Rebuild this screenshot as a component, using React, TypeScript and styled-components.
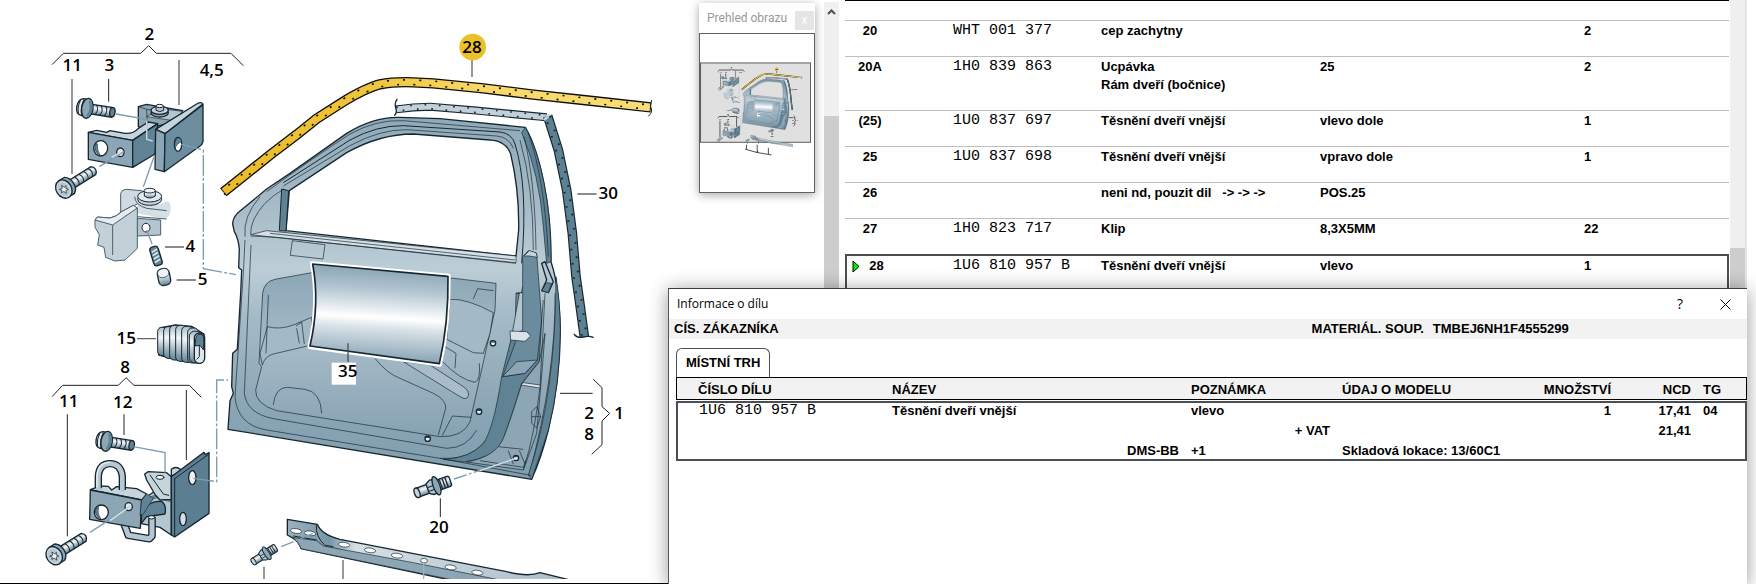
import React from 'react';
import styled, { createGlobalStyle } from 'styled-components';

const GlobalStyle = createGlobalStyle`
  * { box-sizing: border-box; }
  html, body, #root { margin: 0; min-height: 100vh; }
  body {
    background: #fff;
    color: #000;
    overflow: hidden;
    font: bold 13px/18px "Liberation Sans", Arial, sans-serif;
  }
  button { font: inherit; color: inherit; border: 0; padding: 0; background: none; cursor: pointer; }
`;

const uiFont = '"Open Sans", "Segoe UI", sans-serif';
const slate = '#4a4f55';

/* ---------- page frame ---------- */

const Page = styled.main`
  position: relative;
  display: grid;
  grid-template-columns: minmax(0, 839fr) minmax(0, 908fr);
  min-height: 100vh;
  padding-right: 9px;
  overflow: hidden;
`;

const Pane = styled.section`
  display: flex;
  min-width: 0;
`;

const DrawingArea = styled.div`
  position: relative;
  flex: 1;
  min-width: 0;
  overflow: hidden;
  border-bottom: 1px solid #000;
`;

const DrawingSvg = styled.svg`
  display: block;
  width: 680px;
  height: 579px;
`;

const ListArea = styled.div`
  flex: 1;
  min-width: 0;
  margin: 0 1px 0 6px;
  border-top: 1px solid #000;
  padding-top: 19px;
`;

const ScrollTrack = styled.div<{ $top: number; $edge?: boolean }>`
  display: flex;
  flex-direction: column;
  flex: 0 0 ${p => (p.$edge ? 17 : 15)}px;
  margin-top: ${p => p.$top}px;
  background: #f0f0f0;
  border-right: ${p => (p.$edge ? '2px solid #e4e4e4' : '0')};
`;

const ScrollUp = styled.button`
  height: 20px;
  display: grid;
  place-items: center;
`;

const ScrollThumb = styled.div<{ $offset: number }>`
  flex: 1;
  margin-top: ${p => p.$offset}px;
  background: #cdcdcd;
`;

/* ---------- overview window ---------- */

const Overview = styled.aside`
  position: absolute;
  top: 3px;
  right: 9px;
  width: 116px;
  background: #fff;
  box-shadow: 0 2px 9px rgba(0, 0, 0, 0.35);
`;

const OverviewBar = styled.header`
  display: flex;
  align-items: center;
  justify-content: space-between;
  height: 30px;
  padding: 0 1px 0 8px;
  color: #999;
  font: 12px/16px Roboto, "Segoe UI", sans-serif;
`;

const OverviewClose = styled.button`
  width: 19px;
  height: 19px;
  margin-top: 4px;
  background: #e5e5e5;
  color: #fff;
  line-height: 16px;
`;

const OverviewMap = styled.svg`
  display: block;
  width: 116px;
  height: 160px;
  border: 1px solid #606060;
`;

/* ---------- parts list ---------- */

const PartsTable = styled.table`
  width: 100%;
  table-layout: fixed;
  border-spacing: 0;
`;

const Col = styled.col<{ $w?: number }>`
  width: ${p => (p.$w ? `${p.$w}px` : 'auto')};
`;

const PartRow = styled.tr<{ $selected?: boolean }>`
  td, th {
    padding: 1px 0 16px;
    vertical-align: top;
    text-align: left;
    border-top: ${p => (p.$selected ? `2px solid ${slate}` : '1px solid #bfbfbf')};
    border-bottom: ${p => (p.$selected ? `2px solid ${slate}` : '0')};
  }
  th:first-child { border-left: ${p => (p.$selected ? `2px solid ${slate}` : '0')}; }
  td:last-child { border-right: ${p => (p.$selected ? `2px solid ${slate}` : '0')}; }
`;

const Position = styled.span<{ $marked?: boolean }>`
  display: flex;
  align-items: center;
  justify-content: center;
  gap: 9px;
  width: ${p => (p.$marked ? 42 : 50)}px;
`;

const Marker = styled.svg`
  width: 8px;
  height: 13px;
`;

const Line = styled.span`
  display: block;
  white-space: pre;
`;

const Code = styled.span`
  display: block;
  font-family: "Liberation Mono", "Courier New", monospace;
  font-size: 15px;
  font-weight: 400;
  white-space: pre;
`;

/* ---------- part information dialog ---------- */

const Dialog = styled.section`
  position: absolute;
  left: 668px;
  right: 9px;
  top: 288px;
  bottom: -1px;
  background: #fff;
  border-top: 1px solid #3c3c3c;
  border-left: 1px solid #5a5a5a;
  box-shadow: 0 2px 18px rgba(0, 0, 0, 0.4);
`;

const TitleBar = styled.header`
  display: flex;
  align-items: center;
  height: 30px;
  padding: 0 14px 0 8px;
  font: 12px/16px ${uiFont};
`;

const Title = styled.h1`
  flex: 1;
  margin: 0;
  font: inherit;
`;

const WindowButton = styled.button`
  width: 16px;
  height: 16px;
  display: grid;
  place-items: center;
  margin-left: 29px;
  font-size: 14px;
`;

const InfoBand = styled.div`
  display: grid;
  grid-template-columns: 637fr 435fr;
  height: 20px;
  padding-left: 5px;
  background: #f2f2f2;
  line-height: 20px;
`;

const Vin = styled.span`
  margin-left: 9px;
`;

const Tab = styled.button`
  display: block;
  height: 29px;
  margin: 9px 0 0 7px;
  padding: 0 9px;
  border: 1px solid ${slate};
  border-bottom: 0;
  border-radius: 6px 6px 0 0;
  background: #fff;
`;

const DetailTable = styled.table`
  width: calc(100% - 7px);
  margin-left: 7px;
  table-layout: fixed;
  border-spacing: 0;

  th, td { padding: 0; text-align: left; white-space: pre; }
  th:first-child, td:first-child { padding-left: 21px; }
  th {
    height: 23px;
    padding-top: 2px;
    background: #f2f2f2;
    border: solid #000;
    border-width: 1px 0;
  }
  th:first-child { border-left-width: 1px; }
  th:last-child { border-right-width: 1px; }

  tbody::before { content: ""; display: table-row; height: 1px; }
  td { height: 20px; line-height: 16px; vertical-align: top; }
  td:first-child { border-left: 2px solid ${slate}; }
  td:last-child { border-right: 2px solid ${slate}; }
  tbody tr:first-child td { height: 22px; border-top: 2px solid ${slate}; }
  tbody tr:last-child td { height: 18px; border-bottom: 2px solid ${slate}; }
`;

const HeadCell = styled.th<{ $right?: boolean }>`
  && { text-align: ${p => (p.$right ? 'right' : 'left')}; }
`;

const Cell = styled.td<{ $right?: boolean; $gap?: number }>`
  && {
    text-align: ${p => (p.$right ? 'right' : 'left')};
    padding-right: ${p => p.$gap ?? 0}px;
  }
`;

/* ---------- exploded drawing ---------- */

const ink = '#172731';
const pale = '#c6d4dc';
const light = '#b4c6d0';
const mid = '#8ca6b5';
const dark = '#5f8294';

const Label = styled.text`
  font: 600 51px "Open Sans", "Noto Sans", sans-serif;
  fill: #000;
  text-anchor: middle;
`;

const labels: [string, number, number][] = [
  ['2', 448, 121], ['11', 217, 214], ['3', 328, 214], ['4,5', 635, 227],
  ['28', 1416, 160], ['30', 1825, 598], ['4', 571, 756], ['5', 608, 856],
  ['15', 379, 1031], ['8', 375, 1118], ['11', 206, 1222], ['12', 368, 1224],
  ['35', 1043, 1132], ['2', 1767, 1256], ['1', 1857, 1256], ['8', 1767, 1321],
  ['20', 1317, 1598],
];

const Defs = ({ id }: { id: string }) => (
  <defs>
    <linearGradient id={`${id}-door`} x1="0" y1="0" x2="0" y2="1">
      <stop offset="0" stopColor="#8fa9b8" />
      <stop offset="0.22" stopColor="#a3b9c6" />
      <stop offset="0.42" stopColor="#bccdd6" />
      <stop offset="0.55" stopColor="#a5bac7" />
      <stop offset="0.8" stopColor="#8ba6b5" />
      <stop offset="1" stopColor="#7f9dae" />
    </linearGradient>
    <linearGradient id={`${id}-recess`} x1="0" y1="0" x2="0" y2="1">
      <stop offset="0" stopColor="#8ca7b6" />
      <stop offset="0.45" stopColor="#a6bac7" />
      <stop offset="1" stopColor="#86a2b2" />
    </linearGradient>
    <linearGradient id={`${id}-foil`} x1="0.08" y1="0" x2="0" y2="1">
      <stop offset="0" stopColor="#8aa5b4" />
      <stop offset="0.22" stopColor="#b2c5d0" />
      <stop offset="0.38" stopColor="#dde5eb" />
      <stop offset="0.5" stopColor="#ffffff" />
      <stop offset="0.62" stopColor="#d5dfe6" />
      <stop offset="0.8" stopColor="#a9bdc9" />
      <stop offset="1" stopColor="#7595a6" />
    </linearGradient>
    <linearGradient id={`${id}-metal`} x1="0" y1="0" x2="0" y2="1">
      <stop offset="0" stopColor="#a7bcc8" />
      <stop offset="0.35" stopColor="#f4f7f9" />
      <stop offset="1" stopColor="#5f8294" />
    </linearGradient>
    <linearGradient id={`${id}-gold`} x1="0" y1="0" x2="1" y2="0">
      <stop offset="0" stopColor="#ebbb28" />
      <stop offset="0.35" stopColor="#f0c53c" />
      <stop offset="0.6" stopColor="#f9d868" />
      <stop offset="1" stopColor="#f9dc78" />
    </linearGradient>
    <linearGradient id={`${id}-sill`} x1="0" y1="0" x2="1" y2="0">
      <stop offset="0" stopColor="#9ab2c0" />
      <stop offset="0.15" stopColor="#7896a7" />
      <stop offset="0.24" stopColor="#d5dfe5" />
      <stop offset="1" stopColor="#a9bdc9" />
    </linearGradient>
  </defs>
);

const FlangeBolt = ({ id, x, y }: { id: string; x: number; y: number }) => (
  <g transform={`translate(${x} ${y}) rotate(9)`} stroke={ink} strokeWidth="4">
    <path d="M8-14H76Q86 0 76 15H8Z" fill={`url(#${id}-metal)`} />
    <path d="M26-14q10 14 0 28M40-14q10 14 0 28M54-14q10 14 0 28" fill="none" strokeWidth="3" />
    <ellipse cx="76" cy="0" rx="8" ry="14" fill={dark} />
    <path d="M-2-27H-16Q-32-22-32 0T-16 24H-2Z" fill="#dfe7ec" />
    <path d="M-24-20q-7 20 0 40M-14-25q-8 25 0 48" fill="none" strokeWidth="3" />
    <ellipse cx="0" cy="0" rx="17" ry="30" fill={mid} />
    <path d="M4-24q14 24 0 48" stroke={dark} strokeWidth="9" fill="none" />
  </g>
);

const SocketBolt = ({ id, x, y }: { id: string; x: number; y: number }) => (
  <g transform={`translate(${x} ${y}) rotate(-32)`} stroke={ink} strokeWidth="4">
    <path d="M15-14H100Q116 0 100 14H15Z" fill={`url(#${id}-metal)`} />
    <path d="M42-13q9 13 0 26M58-13q9 13 0 26M74-13q9 13 0 26M90-13q9 13 0 26" fill="none" strokeWidth="3" />
    <path d="M-4-29H16Q30-20 30 0T16 28H-4Z" fill={mid} />
    <ellipse cx="-4" cy="0" rx="23" ry="29" fill={pale} />
    <ellipse cx="-5" cy="0" rx="16" ry="21" fill={light} stroke="none" />
    <path d="M-16-6l9 2 3-9 4 9 7-1-5 6 5 7-8-1-4 8-3-9-8 0 5-6Z" fill="#f1f5f7" strokeWidth="2" />
  </g>
);

const Stud = ({ id, x, y, k, r }: { id: string; x: number; y: number; k: number; r: number }) => (
  <g transform={`translate(${x} ${y}) rotate(${r}) scale(${k})`} stroke={ink} strokeWidth="4">
    <rect x="10" y="-16" width="42" height="32" rx="5" fill={`url(#${id}-metal)`} />
    <path d="M22-15v30M31-15v30M40-15v30" fill="none" />
    <rect x="-54" y="-14" width="38" height="28" fill={`url(#${id}-metal)`} />
    <ellipse cx="-54" cy="0" rx="8" ry="15" fill={pale} />
    <path d="M-20-16L-6-23 8-20V22L-8 22-20 14Z" fill={light} />
    <path d="M-20-4H6M-18 8H6" fill="none" strokeWidth="3" />
    <ellipse cx="8" cy="0" rx="10" ry="29" fill={mid} />
  </g>
);

const UpperHinge = () => (
  <g stroke={ink} strokeWidth="4" strokeLinejoin="round">
    <path d="M415 320L440 313 548 332 500 372 440 386 415 380Z" fill={mid} />
    <path d="M415 320L440 328 442 384M440 328L470 332" fill="none" strokeWidth="2" />
    <path d="M440 350L520 362 548 334 480 326Z" fill={light} strokeWidth="2" />
    <ellipse cx="479" cy="338" rx="26" ry="13" fill={mid} />
    <ellipse cx="479" cy="331" rx="26" ry="12" fill={pale} />
    <path d="M468 318V331Q479 339 491 331V318Z" fill={light} strokeWidth="3" />
    <ellipse cx="479" cy="318" rx="11" ry="5" fill="#e9eff3" strokeWidth="3" />
    <path d="M265 397L290 391 320 397 330 392 375 400Q400 402 415 385L445 366 473 371 398 421Z" fill={pale} />
    <path d="M265 397L398 421V502L265 478Z" fill={mid} />
    <path d="M398 421L473 371 465 462 398 502Z" fill={dark} />
    <ellipse cx="302" cy="445" rx="21" ry="23" fill="#fff" />
    <path d="M288 430Q276 450 300 466 290 450 292 432Z" fill={dark} strokeWidth="2" />
    <ellipse cx="361" cy="457" rx="11" ry="13" fill="#e6edf1" />
    <path d="M467 388L590 312Q604 304 609 312L495 401Z" fill={pale} />
    <path d="M467 388L495 401 493 515 465 508Z" fill={mid} />
    <path d="M495 401L609 314V424Q607 434 600 438L493 515Z" fill="#6b8d9e" />
    <ellipse cx="534" cy="433" rx="11" ry="21" fill="#fff" />
    <path d="M536 413Q522 416 524 445 532 428 545 424 542 412 536 413Z" fill={dark} strokeWidth="2" />
  </g>
);

const GhostHinge = ({ id }: { id: string }) => (
  <g stroke="#45616f" strokeWidth="3" strokeLinejoin="round">
    <path d="M362 580Q364 570 378 568L425 572 440 600 405 615 380 636 362 645Z" fill="#cfdae1" />
    <path d="M405 600Q420 615 485 612 512 590 512 625 512 650 495 657L412 640V612Z" fill="#d6dfe5" stroke="none" />
    <path d="M404 590Q405 615 440 625L500 632M412 650L500 657" fill="none" />
    <path d="M412 655L482 660V705L412 708Z" fill="#b4c5cf" />
    <ellipse cx="449" cy="598" rx="36" ry="18" fill="#c4d2da" stroke={ink} />
    <ellipse cx="449" cy="589" rx="36" ry="17" fill="#e2e9ed" stroke={ink} />
    <path d="M433 573V588Q449 600 466 588V573Z" fill={`url(#${id}-metal)`} stroke={ink} />
    <ellipse cx="449" cy="572" rx="17" ry="7" fill="#edf2f5" stroke={ink} />
    <path d="M285 660L292 651 330 654Q350 650 365 635L400 616 412 624V745L375 780 345 783 317 772 312 742 293 735 298 704 285 682Z" fill="#c3d0d8" />
    <path d="M285 660L292 651 330 654Q350 650 365 635L400 616 412 624 338 675Z" fill="#e6ecf0" />
    <path d="M338 675V765" fill="none" />
    <ellipse cx="438" cy="683" rx="12" ry="13" fill="#fff" stroke={ink} />
  </g>
);

const Latch = () => (
  <g transform="translate(0 870)" stroke={ink} strokeWidth="4" strokeLinejoin="round" strokeLinecap="round">
    <path d="M425 630L470 600 514 625V735L480 712 420 700Z" fill={light} />
    <path d="M425 660Q455 630 485 635 500 645 495 672L440 680 424 700Z" fill={dark} />
    <path d="M418 640L470 618 514 632" stroke={dark} strokeWidth="12" fill="none" />
    <path d="M434 552L445 545 500 548 514 560V628L480 630 466 615 440 570Z" fill={pale} />
    <path d="M450 555L490 612 506 616" fill="none" strokeWidth="3" />
    <ellipse cx="480" cy="562" rx="12" ry="6" fill="#fff" strokeWidth="3" />
    <path d="M514 557V538Q527 527 541 538L545 550Z" fill={pale} />
    <path d="M372 700L385 736 448 746 456 738V688" fill="none" strokeWidth="23" />
    <path d="M372 700L385 736 448 746 456 738V688" fill="none" stroke={light} strokeWidth="15" />
    <ellipse cx="455" cy="682" rx="10" ry="5" fill="#edf2f5" strokeWidth="3" />
    <path d="M271 599L300 588 325 589 335 600 350 590 410 596 440 612 425 630Z" fill={pale} />
    <path d="M295 595V558Q298 521 330 521T367 558V600" fill="none" strokeWidth="22" strokeLinecap="butt" />
    <path d="M295 595V558Q298 521 330 521T367 558V600" fill="none" stroke="#b6c8d2" strokeWidth="14" />
    <path d="M291 590V558Q294 517 330 517" fill="none" stroke="#e9eff3" strokeWidth="4" />
    <path d="M271 600L425 630 421 715 269 688Z" fill={mid} />
    <path d="M425 630L440 612 460 625 430 672 421 676Z" fill={dark} strokeWidth="2" />
    <ellipse cx="304" cy="667" rx="21" ry="22" fill="#fff" />
    <path d="M290 652Q278 672 302 687 290 670 295 652Z" fill={dark} strokeWidth="2" />
    <ellipse cx="386" cy="650" rx="11" ry="12" fill="#dfe7ec" />
    <path d="M514 560L612 487 616 494 627 488V670L524 741 514 735Z" fill="#5b7e90" />
    <path d="M524 566L627 492M524 566V738" fill="none" strokeWidth="3" />
    <ellipse cx="577" cy="563" rx="11" ry="21" fill="#f1f5f7" />
    <ellipse cx="549" cy="687" rx="10" ry="20" fill="#d4dee4" />
  </g>
);

const boot: [number, number, number][] = [
  [473, 112, 197], [491, 110, 205], [509, 106, 210], [527, 106, 214], [545, 109, 217], [563, 114, 219],
];

const Boot = ({ id }: { id: string }) => (
  <g transform="translate(0 870)" stroke={ink} strokeWidth="4">
    <path d="M480 114L526 105 575 109 612 132 602 220 540 212 476 195Z" fill={mid} />
    {boot.map(([x, t, b]) => (
      <rect key={x} x={x} y={t} width="32" height={b - t} rx="13" fill={`url(#${id}-metal)`} strokeWidth="3" />
    ))}
    <path d="M568 206V135Q577 114 606 130L592 219Q574 220 568 206Z" fill={`url(#${id}-metal)`} strokeWidth="3" />
    <rect x="583" y="129" width="31" height="91" rx="15" fill="#dfe7ec" />
    <path d="M586 160Q586 132 600 132T611 158V180L600 166 586 168Z" fill={dark} strokeWidth="3" />
    <path d="M598 165V200L590 208" fill="none" strokeWidth="3" />
  </g>
);

const Door = ({ id }: { id: string }) => (
  <g transform="translate(600 0)" stroke={ink} strokeWidth="2" strokeLinejoin="round" fill="none">
    {/* frame and skin, with the window left open */}
    <path
      fillRule="evenodd"
      fill={`url(#${id}-door)`}
      strokeWidth="4"
      d="M98 672Q98 655 112 640L200 567 270 520 440 400Q520 350 600 352L720 356 976 382Q1010 440 1032 550 1054 660 1053 785
         1078 860 1081 990 1080 1150 1045 1290 1025 1370 995 1438L84 1288 90 1202 100 1180 95 1160 98 1060 112 1048
         122 880 125 810 116 803 118 748Q115 715 103 695ZM268 572L440 458Q540 402 640 402L870 420Q918 422 932 462 958 570 956 690L948 768 258 692Z"
    />
    {/* frame profile */}
    <path d="M200 575Q330 480 450 402 530 358 610 362L960 392" />
    <path d="M250 548L450 420Q530 376 610 377L900 396Q935 400 945 432 985 560 965 790" strokeWidth="3" />
    <path d="M250 558L450 437Q540 388 620 389L890 408Q928 412 940 445" />
    <path d="M152 702Q150 660 195 610 220 585 250 568M135 710Q128 650 180 590" />
    <path d="M965 398Q1018 520 1030 680L1040 790 1053 785Q1054 660 1032 550 1010 440 976 382Z" fill={dark} />
    <path d="M972 410Q1005 540 1008 750M985 400Q1035 540 1045 770M960 420Q1000 560 1000 750" />
    <path d="M245 567L266 572 258 693 238 692Z" fill={dark} strokeWidth="3" />
    {/* belt line */}
    <path d="M152 704L200 692 948 768V788L225 712Z" fill="#d5dfe5" />
    <path d="M152 708L230 712 948 790M210 700L945 780" />
    <path d="M277 722L375 734 369 777 271 766Z" />
    {/* inner contours */}
    <path d="M135 720L130 820 105 1190Q112 1275 200 1290L720 1375Q850 1382 880 1270L968 860" />
    <path d="M153 735L133 1180Q140 1240 220 1256L740 1345Q800 1345 830 1290" />
    <path
      d="M335 818L225 838Q192 845 188 880L177 1090 185 1100 167 1170Q165 1212 230 1232L720 1310Q790 1312 810 1265L885 930 888 850 745 833Z"
      fill={`url(#${id}-recess)`}
    />
    <path d="M202 980Q240 990 280 975L335 952V1035L220 1062Q195 1068 187 1095L180 1060Z" fill="#a4b9c6" />
    <path d="M205 885L198 1060M288 978L305 966 313 1032M290 985L298 1030" />
    <path d="M220 1215Q225 1162 262 1162L315 1168Q362 1175 365 1240" />
    <path d="M750 898Q800 895 880 938L870 1000 850 1060 820 1058 740 1018Z" fill="#a4b9c6" />
    <path d="M820 897L833 866 880 872" />
    <path d="M525 1075Q560 1120 600 1135L700 1180Q740 1200 737 1225L715 1305" />
    <path d="M610 1085L780 1190Q800 1203 806 1186 806 1170 790 1160L690 1095Z" fill="#a9bcc9" />
    <path d="M725 1082Q780 1140 825 1147 842 1140 838 1090M735 1040L768 1060 765 1105" />
    <path d="M727 1306L757 1248 815 1252" />
    {/* lock side */}
    <path
      d="M968 880L905 1130Q880 1290 850 1330 810 1375 730 1378L790 1386Q880 1375 905 1330 935 1250 965 1150L1018 1085 1025 960Z"
      fill={dark}
    />
    <path d="M965 1152L1018 1085 1035 1000 1028 1090 1010 1300 970 1410 800 1386Q890 1370 912 1310 935 1250 965 1152Z" fill={mid} />
    <path d="M948 880L968 878V770L985 752 1010 760 1025 960 1012 1080 975 1120 908 1130 945 1030Z" fill="#6a8c9d" />
    <path d="M948 880L968 878V990L935 1010 958 880Z" fill={light} />
    <path d="M972 768L988 752 1008 758 1012 772 988 768Z" fill={pale} />
    <path d="M930 993L980 995 992 1008 975 1024 932 1020Z" fill="#d9e2e8" />
    <path d="M908 1130L950 1085 1012 1080 975 1120Z" fill={mid} />
    <path d="M1025 790L1035 785 1060 845 1045 878 1025 872 1040 840Z" fill={light} strokeWidth="4" />
    <path d="M1025 872L1045 878 1055 850 1040 848Z" fill={dark} />
    <path d="M1035 880L1020 1160Q1005 1300 970 1410M1065 880Q1068 1120 988 1424M1030 900L1024 970" />
    <path d="M1068 830Q1080 900 1081 990 1080 1150 1045 1290L995 1438 985 1425Q1068 1180 1068 830Z" fill={dark} />
    <path d="M970 1148L1020 1155V1164L963 1155Z" fill="#e1e8ed" />
    <path d="M1010 1220L1022 1250 1010 1284 995 1270V1235ZM995 1250H1022" />
    <path d="M895 1340L970 1348M840 1382L970 1402 978 1380M925 1352L940 1392M958 1352L975 1392M720 1375L992 1426" />
    {[[879, 1030], [837, 1235], [683, 1316], [948, 1374]].map(([x, y]) => (
      <g key={x}>
        <circle cx={x} cy={y} r="8" fill="#e9eff3" strokeWidth="4" />
        <path d={`M${x - 5} ${y - 4}h10`} strokeWidth="3" />
      </g>
    ))}
    {/* foil panel */}
    <path d="M336 790L746 827Q748 970 720 1094L328 1041Q358 910 336 790Z" fill="#fff" stroke="#fff" strokeWidth="12" />
    <path d="M338 792L744 829Q746 970 718 1091L330 1038Q360 910 338 792Z" fill={`url(#${id}-foil)`} strokeWidth="5" />
    <rect x="395" y="1088" width="73" height="66" fill="#fff" stroke="none" />
    <path d="M444 1030V1086" strokeWidth="4" stroke="#44525b" />
  </g>
);

const goldPath = 'M70 577L135 525 210 465 290 404 350 356 430 305Q500 263 540 253 580 245 640 247L700 250 850 265 1000 284 1150 300 1353 322';
const topSeal = 'M588 328Q640 320 690 320L820 331 1040 352';
const sideSeal = 'M1043 348L1075 450 1100 570 1117 700 1128 830 1138 900 1153 1010';

const Seals = ({ id }: { id: string }) => (
  <g transform="translate(600 0)" fill="none">
    <path d={goldPath} stroke="#0d0d08" strokeWidth="31" />
    <path d="M72 575L135 525 210 465 290 404 350 356 430 305Q500 263 540 253 580 245 640 247L700 250 850 265 1000 284 1150 300 1350 322" stroke={`url(#${id}-gold)`} strokeWidth="23" />
    <g stroke="#141208" strokeWidth="5">
      <path d={goldPath} strokeDasharray="6 42" transform="translate(2 7)" />
      <path d={goldPath} strokeDasharray="6 42" strokeDashoffset="-22" transform="translate(-2 -7)" />
    </g>
    <path d="M1355 300Q1347 318 1355 330 1356 340 1345 349" stroke={ink} strokeWidth="3" />
    <path d={topSeal} stroke={ink} strokeWidth="24" />
    <path d={topSeal} stroke="#c2d0d9" strokeWidth="17" />
    <path d={topSeal} stroke={ink} strokeWidth="5" strokeDasharray="5 38" transform="translate(0 -6)" />
    <path d={topSeal} stroke={ink} strokeWidth="5" strokeDasharray="5 38" strokeDashoffset="-20" transform="translate(0 6)" />
    <path d={sideSeal} stroke={ink} strokeWidth="29" />
    <path d={sideSeal} stroke="#5d8092" strokeWidth="22" />
    <path d="M1032 360L1050 344" stroke="#c2d0d9" strokeWidth="8" />
    <path d={sideSeal} stroke={ink} strokeWidth="6" strokeDasharray="5 38" transform="translate(7 0)" />
    <path d={sideSeal} stroke={ink} strokeWidth="6" strokeDasharray="5 38" strokeDashoffset="-20" transform="translate(-7 0)" />
    <path d="M592 297Q582 308 588 326 592 338 583 347M1122 1002Q1132 1016 1150 1011T1181 1013" stroke={ink} strokeWidth="4" />
  </g>
);

const Sill = ({ id, full }: { id: string; full?: boolean }) => (
  <g transform="translate(600 720)" stroke={ink} strokeWidth="4" strokeLinejoin="round">
    <path
      d={full
        ? 'M262 838L352 853Q365 885 420 898L940 1000 1160 1030 1160 1085 760 1018 303 926 285 898 262 885Z'
        : 'M262 838L352 853Q365 885 420 898L920 995Q985 1012 1020 998L1110 1020 760 1022 303 926Q298 906 280 895L262 885Z'}
      fill={`url(#${id}-sill)`}
    />
    <path d="M277 892L350 902 370 918 640 968 900 1020H760L303 926Q296 906 277 892Z" fill={mid} strokeWidth="2" />
    <path d="M349 855Q346 890 375 916L400 920M350 900L280 888" fill="none" strokeWidth="3" />
    {[[288, 873], [330, 880], [432, 914], [510, 931], [591, 947], [672, 962], [752, 982], [832, 998]].map(([x, y]) => (
      <ellipse key={x} cx={x} cy={y} rx={x === 672 ? 10 : 17} ry="7" fill="#fff" strokeWidth="2" transform={`rotate(8 ${x} ${y})`} />
    ))}
  </g>
);

const Leaders = ({ weight }: { weight: number }) => (
  <g fill="none" stroke="#222" strokeWidth={weight}>
    <path d="M156 194L190 160H422L446 137 469 160H693L730 197" />
    <path d="M156 1190L188 1156H355L378 1133 402 1156H568L604 1192" />
    <path d="M1780 1138L1806 1163V1220L1829 1240 1806 1263V1334L1775 1363" />
    <path d="M216 237V522M537 180V315M495 741H552M530 840H588M1732 582H1790M411 1016H468M792 1700V1737M1029 1680V1737M1416 180V231" stroke="#666" strokeWidth={weight + 1} />
    <path d="M326 237V305M202 1243V1609M372 1243V1305M559 1170V1380M1680 1180H1778M1321 1495V1551" />
  </g>
);

const AssemblyLines = () => (
  <g fill="none" stroke="#7c9db1" strokeWidth="4">
    <path d="M348 342L440 358V418L458 423M298 500L372 455M462 470L430 560M440 690L456 732" />
    <path d="M440 362V418L458 423" stroke="#c5d6e0" />
    <path d="M543 433L610 450V806L708 824" strokeDasharray="62 7 8 7" />
    <path d="M400 1340L495 1358V1418M270 1597L392 1518" />
    <path d="M580 1435L650 1445V1140H684" strokeDasharray="62 7 8 7" />
    <path d="M1362 1437L1545 1376" strokeDasharray="40 7 8 7" />
    <path d="M844 1640L945 1598" strokeDasharray="40 7 8 7" />
    <path d="M1271 1690V1737" stroke="#9bb3c2" />
    <path d="M392 1518L330 1562M361 457L335 472M1545 1376L1440 1412" stroke="#d7e2e9" />
  </g>
);

const Drawing = ({ id, overview }: { id: string; overview?: boolean }) => (
  <g>
    <Defs id={id} />
    <UpperHinge />
    <GhostHinge id={id} />
    <FlangeBolt id={id} x={262} y={325} />
    <SocketBolt id={id} x={195} y={565} />
    <g stroke={ink} strokeWidth="4">
      <g transform="translate(468 768) rotate(-17)">
        <rect x="-13" y="-29" width="26" height="58" rx="9" fill={dark} />
        <path d="M-9-14L9-19M-9-4L9-9M-9 7L9 2M-9 18L9 13" stroke="#e2e9ee" strokeWidth="5" />
      </g>
      <g transform="translate(492 831) rotate(-12)">
        <rect x="-18" y="-25" width="36" height="50" rx="14" fill={`url(#${id}-metal)`} />
        <rect x="-17" y="-25" width="34" height="26" rx="13" fill="#f2f5f7" strokeWidth="2" />
      </g>
    </g>
    <Boot id={id} />
    <Latch />
    <FlangeBolt id={id} x={320} y={1324} />
    <SocketBolt id={id} x={166} y={1665} />
    <Door id={id} />
    <Seals id={id} />
    <Stud id={id} x={1302} y={1460} k={1} r={-20} />
    <Sill id={id} full={overview} />
    <Stud id={id} x={795} y={1663} k={0.75} r={-32} />
    <AssemblyLines />
    <Leaders weight={overview ? 15 : 3} />
    <circle cx="1418" cy="141" r="40" fill="#ebc02b" />
    {overview && (
      <path
        d="M739 1853L987 1925 1020 1890M987 1925L1309 1980M770 1760V1850M1000 1760V1925M1240 1830V1960"
        fill="none"
        stroke="#111"
        strokeWidth="16"
      />
    )}
    {labels.map(([t, x, y]) => (
      <Label key={`${t}-${x}`} x={x} y={y}>{t}</Label>
    ))}
  </g>
);

/* ---------- data ---------- */

interface Part {
  pos: string;
  code?: string;
  name: string[];
  note?: string;
  qty?: string;
  selected?: boolean;
}

const parts: Part[] = [
  { pos: '20', code: 'WHT 001 377', name: ['cep zachytny'], qty: '2' },
  { pos: '20A', code: '1H0 839 863', name: ['Ucpávka', 'Rám dveří (bočnice)'], note: '25', qty: '2' },
  { pos: '(25)', code: '1U0 837 697', name: ['Těsnění dveří vnější'], note: 'vlevo dole', qty: '1' },
  { pos: '25', code: '1U0 837 698', name: ['Těsnění dveří vnější'], note: 'vpravo dole', qty: '1' },
  { pos: '26', name: ['neni nd, pouzit dil   -> -> ->'], note: 'POS.25' },
  { pos: '27', code: '1H0 823 717', name: ['Klip'], note: '8,3X5MM', qty: '22' },
  { pos: '28', code: '1U6 810 957 B', name: ['Těsnění dveří vnější'], note: 'vlevo', qty: '1', selected: true },
];

export default function App() {
  return (
    <>
      <GlobalStyle />
      <Page>
        <Pane>
          <DrawingArea>
            <DrawingSvg viewBox="0 0 2040 1737" role="img" aria-label="Dveře">
              <Drawing id="main" />
            </DrawingSvg>
            <Overview>
              <OverviewBar>
                Prehled obrazu
                <OverviewClose type="button">x</OverviewClose>
              </OverviewBar>
              <OverviewMap viewBox="-225 -612 2442 3385" aria-hidden="true">
                <rect x="-214" y="8" width="2357" height="1700" fill="#e0e0e0" stroke="#606060" strokeWidth="22" />
                <Drawing id="mini" overview />
              </OverviewMap>
            </Overview>
          </DrawingArea>
          <ScrollTrack $top={2}>
            <ScrollUp type="button" aria-label="Nahoru">
              <svg width="9" height="6" viewBox="0 0 9 6">
                <path d="M1 5L4.500 1.500 8 5" fill="none" stroke="#505050" strokeWidth="2" />
              </svg>
            </ScrollUp>
            <ScrollThumb $offset={94} />
          </ScrollTrack>
        </Pane>

        <Pane>
          <ListArea>
            <PartsTable>
              <colgroup>
                <Col $w={108} />
                <Col $w={148} />
                <Col $w={219} />
                <Col />
                <Col $w={145} />
              </colgroup>
              <tbody>
                {parts.map(p => (
                  <PartRow key={p.pos} $selected={p.selected}>
                    <th scope="row">
                      <Position $marked={p.selected}>
                        {p.selected && (
                          <Marker viewBox="0 0 8 13">
                            <path d="M1 1L7 6.500 1 12Z" fill="#00f000" stroke="#000" />
                          </Marker>
                        )}
                        {p.pos}
                      </Position>
                    </th>
                    <td><Code>{p.code}</Code></td>
                    <td>{p.name.map(n => <Line key={n}>{n}</Line>)}</td>
                    <td><Line>{p.note}</Line></td>
                    <td><Line>{p.qty}</Line></td>
                  </PartRow>
                ))}
              </tbody>
            </PartsTable>
          </ListArea>
          <ScrollTrack $top={0} $edge>
            <ScrollThumb $offset={248} />
          </ScrollTrack>
        </Pane>

        <Dialog role="dialog" aria-labelledby="dialog-title">
          <TitleBar>
            <Title id="dialog-title">Informace o dílu</Title>
            <WindowButton type="button">?</WindowButton>
            <WindowButton type="button" aria-label="Zavřít">
              <svg width="11" height="11" viewBox="0 0 11 11">
                <path d="M0.500 0.500L10.500 10.500M10.500 0.500L0.500 10.500" stroke="#000" />
              </svg>
            </WindowButton>
          </TitleBar>
          <InfoBand>
            <span>CÍS. ZÁKAZNÍKA</span>
            <span>
              MATERIÁL. SOUP.
              <Vin>TMBEJ6NH1F4555299</Vin>
            </span>
          </InfoBand>
          <Tab type="button">MÍSTNÍ TRH</Tab>
          <DetailTable>
            <colgroup>
              <Col $w={216} />
              <Col $w={299} />
              <Col $w={151} />
              <Col />
              <Col $w={80} />
              <Col $w={80} />
              <Col $w={12} />
              <Col $w={44} />
            </colgroup>
            <thead>
              <tr>
                <th>ČÍSLO DÍLU</th>
                <th>NÁZEV</th>
                <th>POZNÁMKA</th>
                <th>ÚDAJ O MODELU</th>
                <HeadCell $right>MNOŽSTVÍ</HeadCell>
                <HeadCell $right>NCD</HeadCell>
                <th />
                <th>TG</th>
              </tr>
            </thead>
            <tbody>
              <tr>
                <td><Code>1U6 810 957 B</Code></td>
                <td>Těsnění dveří vnější</td>
                <td>vlevo</td>
                <td />
                <Cell $right>1</Cell>
                <Cell $right>17,41</Cell>
                <td />
                <td>04</td>
              </tr>
              <tr>
                <td />
                <td />
                <Cell $right $gap={12}>+ VAT</Cell>
                <td />
                <td />
                <Cell $right>21,41</Cell>
                <td />
                <td />
              </tr>
              <tr>
                <td />
                <Cell $right $gap={12}>DMS-BB</Cell>
                <td>+1</td>
                <td>Skladová lokace: 13/60C1</td>
                <td />
                <td />
                <td />
                <td />
              </tr>
            </tbody>
          </DetailTable>
        </Dialog>
      </Page>
    </>
  );
}
